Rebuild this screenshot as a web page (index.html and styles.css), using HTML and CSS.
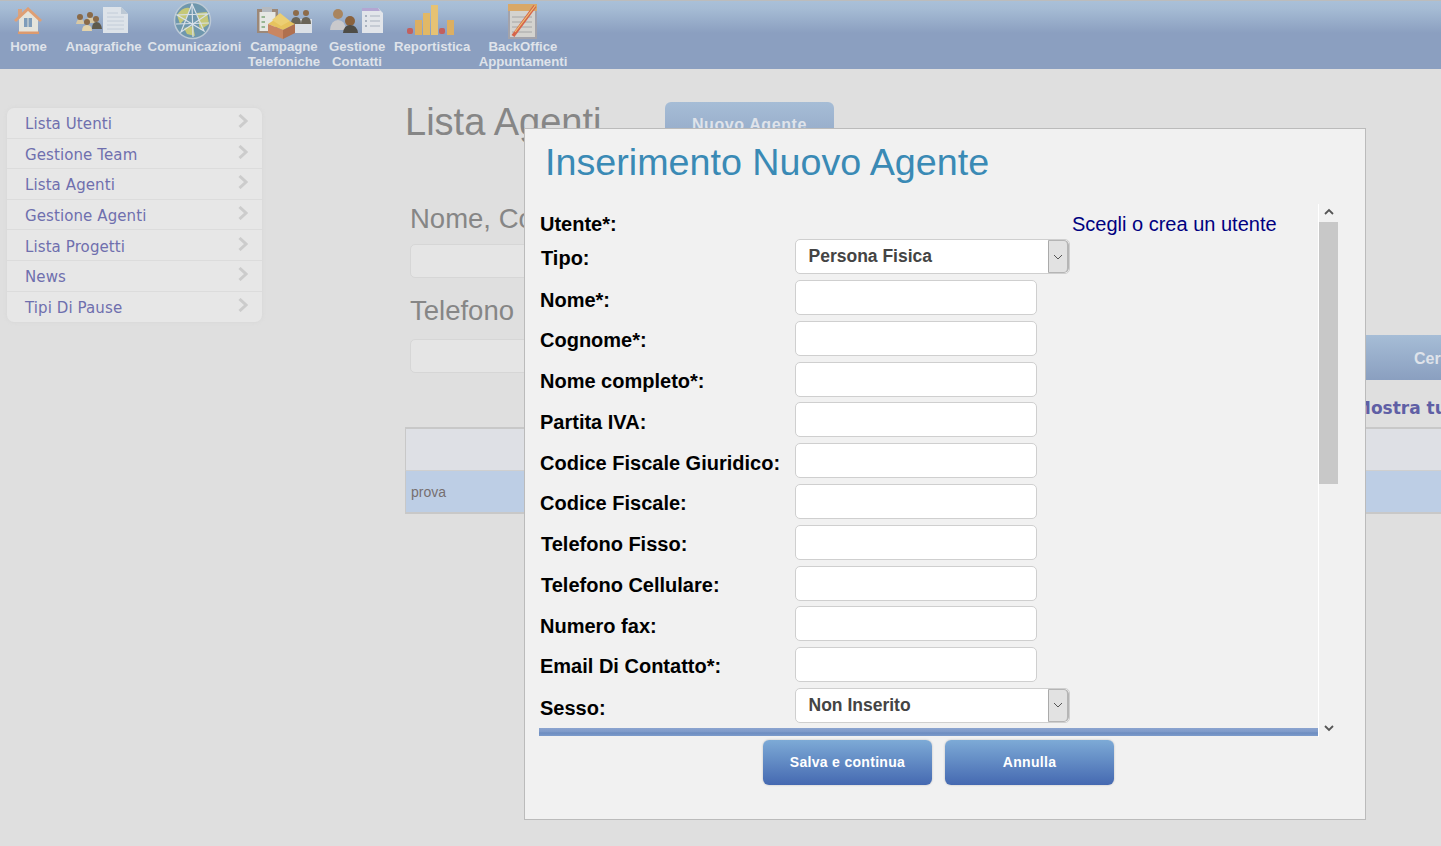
FILE: index.html
```html
<!DOCTYPE html>
<html lang="it">
<head>
<meta charset="utf-8">
<title>Lista Agenti</title>
<link rel="stylesheet" href="styles.css">
</head>
<body>
<header class="topbar">
  <a class="nav-item nav-home">
    <svg class="icon" width="30" height="28" viewBox="14 7 30 28"><rect x="18" y="9" width="4" height="8" fill="#d9a37f"/><path d="M19 18 L28 10 L38 18 V33 H19 Z" fill="#e4e4dc"/><rect x="24" y="18" width="3.500" height="9" fill="#7f9dba"/><rect x="28.500" y="18" width="3.500" height="9" fill="#7f9dba"/><path d="M15 21 L28 9 L41 21" fill="none" stroke="#df9f74" stroke-width="3"/><rect x="18" y="31.500" width="21" height="2.500" fill="#dc9a6e"/></svg>
    <span>Home</span>
  </a>
  <a class="nav-item nav-ana">
    <svg class="icon" width="56" height="28" viewBox="74 6 56 28"><g fill="#d8c8a4"><path d="M76 24 Q77 19 80 19 Q84 19 84 24 Z"/><path d="M86 23 Q87 17 90 17 Q94 17 95 23 Z"/></g><g fill="#8a6a48"><circle cx="80" cy="17" r="3"/><circle cx="90" cy="15" r="3"/><circle cx="96" cy="19" r="3"/><circle cx="87" cy="22" r="3"/></g><path d="M82 31 Q82 25 87 25 Q92 25 92 31 Z" fill="#e3d3ac"/><path d="M92 29 Q92 22 96.500 22 Q101 22 102 29 Z" fill="#5f5a4c"/><path d="M103 7 H121 L128 14 V33 H103 Z" fill="#dde3e9"/><path d="M121 7 L128 14 H121 Z" fill="#bcc8d4"/><g stroke="#c2ccd8"><path d="M107 13 H118"/><path d="M107 17 H124"/><path d="M107 21 H124"/><path d="M107 25 H124"/><path d="M107 29 H124"/></g></svg>
    <span>Anagrafiche</span>
  </a>
  <a class="nav-item nav-com">
    <svg class="icon" width="40" height="40" viewBox="173 1 40 40"><circle cx="192.500" cy="20.500" r="18" fill="#6f97ad" stroke="#bcc9d5" stroke-width="1.500"/><path d="M177 15 Q183 6 190 8 L187 17 L180 24 Z M197 13 L207 12 L209 24 L200 30 Z M184 28 L193 26 L195 36 L187 34 Z" fill="#c5c878"/><g stroke="#d8e0e8" stroke-width="1.200" fill="none"><path d="M192 4 L204 31 L177 15 L208 14 L181 32 Z"/><path d="M192 4 L193 37"/><path d="M176 24 L209 23"/></g></svg>
    <span>Comunicazioni</span>
  </a>
  <a class="nav-item nav-cam">
    <svg class="icon" width="58" height="35" viewBox="256 5 58 35"><rect x="257" y="9" width="21" height="24" fill="#9c8878"/><rect x="259.500" y="12" width="16" height="19" fill="#e6e7e3"/><rect x="262" y="7" width="10" height="5" fill="#b5bac0"/><g stroke="#7ea678" stroke-width="1.500"><path d="M261.500 17 H265"/><path d="M261.500 22 H265"/><path d="M261.500 27 H265"/></g><path d="M295 19 H312 V33 H295 Z" fill="#dbe0e6"/><g fill="#8d6c4a"><circle cx="296" cy="13" r="3"/><circle cx="306" cy="13" r="3"/></g><path d="M291 24 Q291 17 296 17 Q301 17 301 24 Z" fill="#6a6558"/><path d="M301 24 Q301 17 306 17 Q311 17 311 24 Z" fill="#6a6558"/><path d="M268 24 L280 16 L295 24 L283 30 Z" fill="#e7c35e"/><path d="M268 24 L283 30 V39 L268 33 Z" fill="#c98662"/><path d="M295 24 L283 30 V39 L295 33 Z" fill="#b0704f"/><path d="M272 20 L280 13 L290 21 L281 26 Z" fill="#eccf73"/></svg>
    <span>Campagne<br>Telefoniche</span>
  </a>
  <a class="nav-item nav-ges">
    <svg class="icon" width="56" height="29" viewBox="329 6 56 29"><circle cx="338" cy="14" r="5" fill="#a9855f"/><path d="M330 30 Q331 20 338 20 Q345 20 346 30 Z" fill="#c9c9cc"/><circle cx="350" cy="21" r="5" fill="#8a623d"/><path d="M343 33 Q344 25 350 25 Q357 25 358 33 Z" fill="#4e4c46"/><path d="M362 8 H378 L383 13 V33 H362 Z" fill="#e2e5ea"/><path d="M362 8 H378 L380 11 H362 Z" fill="#b3a6d2"/><g stroke="#a9b2bf"><path d="M370 16 H380"/><path d="M370 21 H380"/><path d="M370 26 H380"/></g><g fill="#a9b2bf"><rect x="365" y="15" width="2" height="2"/><rect x="365" y="20" width="2" height="2"/><rect x="365" y="25" width="2" height="2"/></g></svg>
    <span>Gestione<br>Contatti</span>
  </a>
  <a class="nav-item nav-rep">
    <svg class="icon" width="50" height="32" viewBox="405 4 50 32"><rect x="407" y="28" width="6" height="6" rx="2" fill="#c2605f"/><rect x="415" y="20" width="7" height="15" fill="#dcaf62"/><rect x="423" y="13" width="7" height="22" fill="#e1b866"/><rect x="431" y="5" width="7" height="30" fill="#e6c274"/><rect x="439" y="28" width="6" height="6" rx="2" fill="#c2605f"/><rect x="447" y="20" width="7" height="15" fill="#dcaf62"/></svg>
    <span>Reportistica</span>
  </a>
  <a class="nav-item nav-back">
    <svg class="icon" width="31" height="37" viewBox="507 3 31 37"><rect x="508" y="5" width="29" height="34" fill="#a3a3ab"/><rect x="510" y="11" width="25" height="26" fill="#d4d3cf"/><rect x="508" y="4" width="29" height="7" fill="#d9a868"/><g stroke="#a6a6a6"><path d="M512 17 H532"/><path d="M512 22 H532"/><path d="M512 27 H532"/><path d="M512 32 H532"/></g><path d="M513 36 L535 6" stroke="#d6654a" stroke-width="3.500"/><path d="M515 32 L535 6" stroke="#ecc475" stroke-width="1.200"/></svg>
    <span>BackOffice<br>Appuntamenti</span>
  </a>
</header>

<div class="page">
  <aside class="sidebar">
    <a class="side-link">Lista Utenti<svg width="10" height="14" viewBox="0 0 10 14"><path d="M1.500 1 L8 7 L1.500 13" fill="none" stroke="#ccc" stroke-width="3"/></svg></a>
    <a class="side-link">Gestione Team<svg width="10" height="14" viewBox="0 0 10 14"><path d="M1.500 1 L8 7 L1.500 13" fill="none" stroke="#ccc" stroke-width="3"/></svg></a>
    <a class="side-link">Lista Agenti<svg width="10" height="14" viewBox="0 0 10 14"><path d="M1.500 1 L8 7 L1.500 13" fill="none" stroke="#ccc" stroke-width="3"/></svg></a>
    <a class="side-link">Gestione Agenti<svg width="10" height="14" viewBox="0 0 10 14"><path d="M1.500 1 L8 7 L1.500 13" fill="none" stroke="#ccc" stroke-width="3"/></svg></a>
    <a class="side-link">Lista Progetti<svg width="10" height="14" viewBox="0 0 10 14"><path d="M1.500 1 L8 7 L1.500 13" fill="none" stroke="#ccc" stroke-width="3"/></svg></a>
    <a class="side-link">News<svg width="10" height="14" viewBox="0 0 10 14"><path d="M1.500 1 L8 7 L1.500 13" fill="none" stroke="#ccc" stroke-width="3"/></svg></a>
    <a class="side-link">Tipi Di Pause<svg width="10" height="14" viewBox="0 0 10 14"><path d="M1.500 1 L8 7 L1.500 13" fill="none" stroke="#ccc" stroke-width="3"/></svg></a>
  </aside>

  <main class="content">
    <div class="title-row">
      <h1>Lista Agenti</h1>
      <a class="btn-new">Nuovo Agente</a>
    </div>
    <div class="filter-row">
      <div class="filters">
        <label class="filter-label">Nome, Cognome</label>
        <div class="filter-input"></div>
        <label class="filter-label filter-second">Telefono</label>
        <div class="filter-input"></div>
      </div>
      <a class="btn-search">Cerca</a>
    </div>
    <div class="show-all">Mostra tutti</div>
    <div class="table">
      <div class="thead"></div>
      <div class="trow">prova</div>
    </div>
  </main>
</div>

<section class="modal">
  <h2>Inserimento Nuovo Agente</h2>
  <div class="modal-scroll">
    <div class="form">
      <div class="row row-user"><label>Utente*:</label><a class="user-link">Scegli o crea un utente</a></div>
      <div class="row"><label class="shift lab-tipo">Tipo:</label><div class="select"><span>Persona Fisica</span><i><svg width="10" height="6" viewBox="0 0 10 6"><path d="M1 1 L5 5 L9 1" fill="none" stroke="#555"/></svg></i></div></div>
      <div class="row"><label>Nome*:</label><input type="text"></div>
      <div class="row"><label>Cognome*:</label><input type="text"></div>
      <div class="row"><label>Nome completo*:</label><input type="text"></div>
      <div class="row"><label>Partita IVA:</label><input type="text"></div>
      <div class="row"><label>Codice Fiscale Giuridico:</label><input type="text"></div>
      <div class="row"><label>Codice Fiscale:</label><input type="text"></div>
      <div class="row"><label class="shift">Telefono Fisso:</label><input type="text"></div>
      <div class="row"><label class="shift">Telefono Cellulare:</label><input type="text"></div>
      <div class="row"><label>Numero fax:</label><input type="text"></div>
      <div class="row"><label>Email Di Contatto*:</label><input type="text"></div>
      <div class="row"><label class="lab-sesso">Sesso:</label><div class="select"><span>Non Inserito</span><i><svg width="10" height="6" viewBox="0 0 10 6"><path d="M1 1 L5 5 L9 1" fill="none" stroke="#555"/></svg></i></div></div>
    </div>
    <div class="modal-rule"></div>
    <div class="scrollbar">
      <svg class="arrow" width="10" height="7" viewBox="0 0 10 7"><path d="M1 6 L5 2 L9 6" fill="none" stroke="#555" stroke-width="1.800"/></svg>
      <div class="track"><div class="thumb"></div></div>
      <svg class="arrow" width="10" height="7" viewBox="0 0 10 7"><path d="M1 1 L5 5 L9 1" fill="none" stroke="#555" stroke-width="1.800"/></svg>
    </div>
  </div>
  <div class="modal-actions">
    <a class="btn-blue">Salva e continua</a>
    <a class="btn-blue">Annulla</a>
  </div>
</section>
</body>
</html>
```

FILE: styles.css
```css
* { box-sizing: border-box; }
html, body { margin: 0; height: 846px; overflow: hidden; }
body {
  position: relative;
  width: 1441px;
  background: #dfdfdf;
  font-family: "Liberation Sans", Arial, sans-serif;
}

/* top navigation */
.topbar {
  display: flex;
  align-items: flex-start;
  height: 69px;
  border-top: 1px solid #bcbcbc;
  background: linear-gradient(#a9c0d8 0, #a5bbd4 8px, #8b9fc0 32px, #8b9fc0 100%);
  color: #dfe3ea;
  font-weight: 700;
  font-size: 13.200px;
  line-height: 15px;
  text-align: center;
  white-space: nowrap;
}
.nav-item {
  position: relative;
  display: block;
  height: 68px;
  padding-top: 37.500px;
}
.nav-item .icon { position: absolute; filter: blur(0.5px); }
.nav-home { width: 37px; margin-left: 10px; }
.nav-home .icon { top: 6px; left: 4px; }
.nav-ana { width: 77px; margin-left: 18px; }
.nav-ana .icon { top: 5px; left: 9px; }
.nav-com { width: 95px; margin-left: 5px; }
.nav-com .icon { top: 0; left: 26px; }
.nav-cam { width: 74px; margin-left: 5px; }
.nav-cam .icon { top: 4px; left: 9px; }
.nav-ges { width: 56px; margin-left: 8px; }
.nav-ges .icon { top: 5px; left: 0; }
.nav-rep { width: 75px; margin-left: 9px; }
.nav-rep .icon { top: 3px; left: 11px; }
.nav-back { width: 90px; margin-left: 9px; }
.nav-back .icon { top: 2px; left: 29px; }

/* underlying page */
.page { display: flex; align-items: flex-start; }
.sidebar {
  flex: none;
  width: 255px;
  margin: 39px 0 0 7px;
  border-radius: 7px;
  background: #e7e7e7;
  box-shadow: 0 0 4px #d6d6d6;
  overflow: hidden;
}
.side-link {
  display: flex;
  justify-content: space-between;
  align-items: center;
  height: 30.600px;
  padding: 3px 14px 0 18px;
  border-bottom: 1px solid #dcdcdc;
  color: #6f6fae;
  font-family: "DejaVu Sans", Verdana, sans-serif;
  font-size: 15px;
  letter-spacing: 0.100px;
}
.side-link:last-child { border-bottom: 0; }
.side-link svg { margin-top: -6px; }

.content { flex: none; width: 1036px; margin-left: 143px; }
.title-row { display: flex; align-items: flex-start; padding-top: 33px; height: 132px; }
h1 {
  margin: 0;
  width: 260px;
  color: #868686;
  font-size: 38px;
  font-weight: 400;
  line-height: 40px;
}
.btn-new {
  display: block;
  width: 169px;
  height: 60px;
  padding-top: 14px;
  border-radius: 6px;
  background: linear-gradient(#a6bdd6, #8a9fc0);
  color: #dfe3ea;
  font-size: 16px;
  font-weight: 700;
  letter-spacing: 0.600px;
  text-align: center;
}
.filter-row { display: flex; justify-content: space-between; align-items: flex-start; padding-left: 5px; }
.filters { width: 400px; }
.filter-label {
  display: block;
  height: 39px;
  color: #868686;
  font-size: 27.500px;
  line-height: 35px;
  white-space: nowrap;
}
.filter-input {
  height: 34px;
  margin-top: 4px;
  border: 1px solid #d6d6d6;
  border-radius: 5px;
  background: #e5e5e5;
}
.filter-second { margin-top: 13px; height: 44px; line-height: 39px; }
.btn-search {
  display: block;
  width: 146px;
  height: 45px;
  margin-top: 134px;
  margin-right: -71px;
  padding-left: 48px;
  background: linear-gradient(#a6bdd6, #8a9fc0);
  color: #dfe3ea;
  font-size: 16px;
  font-weight: 700;
  line-height: 47px;
}
.show-all {
  height: 31px;
  margin-top: 16px;
  padding-left: 949px;
  color: #5f5fa5;
  font-family: "DejaVu Sans", Verdana, sans-serif;
  font-size: 17px;
  font-weight: 700;
  line-height: 24px;
  white-space: nowrap;
  overflow: hidden;
}
.table { width: 1036px; }
.thead { height: 44px; border-top: 2px solid #c8c8c8; border-left: 1px solid #c8c8c8; border-bottom: 1px solid #cfcfcf; background: #dee0e5; }
.trow {
  height: 43px;
  padding-left: 5px;
  border-left: 1px solid #c8c8c8;
  border-bottom: 2px solid #c8c8c8;
  background: #bdcee5;
  color: #776f70;
  font-size: 14px;
  line-height: 43px;
}

/* modal */
.modal {
  position: absolute;
  left: 524px;
  top: 128px;
  width: 842px;
  height: 692px;
  padding: 0 0 0 14px;
  border: 1px solid #bbb;
  background: #f1f1f1;
}
h2 {
  margin: 0;
  height: 76px;
  padding: 13px 0 0 6px;
  color: #3a8ab5;
  font-size: 37.700px;
  font-weight: 400;
  line-height: 41px;
}
.modal-scroll { position: relative; width: 799px; height: 531px; }
.form { width: 779px; height: 523px; overflow: hidden; padding-left: 1px; }
.row {
  display: grid;
  grid-template-columns: 255px 1fr;
  align-items: start;
  height: 40.780px;
  color: #000;
  font-size: 20px;
  font-weight: 700;
}
.row label { display: block; padding-top: 7.400px; line-height: 24px; white-space: nowrap; }
.row label.shift { padding-left: 1px; }
.row label.lab-tipo { padding-top: 7px; }
.row label.lab-sesso { padding-top: 8px; }
.row-user { grid-template-columns: 532px 1fr; height: 34.400px; }
.row-user label { padding-top: 7px; }
.user-link { padding-top: 7px; color: #000080; font-weight: 400; line-height: 24px; white-space: nowrap; }
input {
  display: block;
  width: 242px;
  height: 35px;
  padding: 0 10px;
  border: 1px solid #cfcfcf;
  border-radius: 5px;
  background: #fff;
  outline: none;
}
.select {
  display: flex;
  justify-content: space-between;
  width: 275px;
  height: 35px;
  border: 1px solid #cfcfcf;
  border-radius: 5px;
  background: #fff;
  color: #444;
  font-size: 17.500px;
  line-height: 32px;
  overflow: hidden;
}
.select span { padding-left: 12.500px; }
.select i {
  display: flex;
  align-items: center;
  justify-content: center;
  width: 21px;
  border-left: 1px solid #aaa;
  border-right: 2px solid #b5b5b5;
  border-top: 1px solid #b5b5b5;
  border-bottom: 1px solid #b5b5b5;
  border-radius: 0 5px 5px 0;
  background: #e2e2e2;
}
.modal-rule {
  width: 779px;
  height: 8px;
  background: linear-gradient(#8ba4cf, #7d9ac9 50%, #6c8cc0 60%, #7c9bcb);
}
.scrollbar {
  position: absolute;
  top: -1px;
  right: 0;
  display: flex;
  flex-direction: column;
  align-items: center;
  width: 20px;
  height: 533px;
  border-left: 1px solid #fff;
  background: #f1f1f1;
}
.arrow { flex: none; margin: 4px 0 7px; }
.track { flex: 1; width: 100%; }
.thumb { width: 100%; height: 262px; background: #c8c8c8; }
.scrollbar .arrow:last-child { margin: 0 0 5px; }
.modal-actions { display: flex; gap: 13px; padding: 4px 0 0 224px; }
.btn-blue {
  display: block;
  width: 169px;
  height: 45px;
  border-radius: 6px;
  background: linear-gradient(#7daad6, #4569b1);
  box-shadow: 0 0 2px #b5b5b5;
  color: #fff;
  font-size: 14px;
  font-weight: 700;
  letter-spacing: 0.300px;
  line-height: 44px;
  text-align: center;
}
```
